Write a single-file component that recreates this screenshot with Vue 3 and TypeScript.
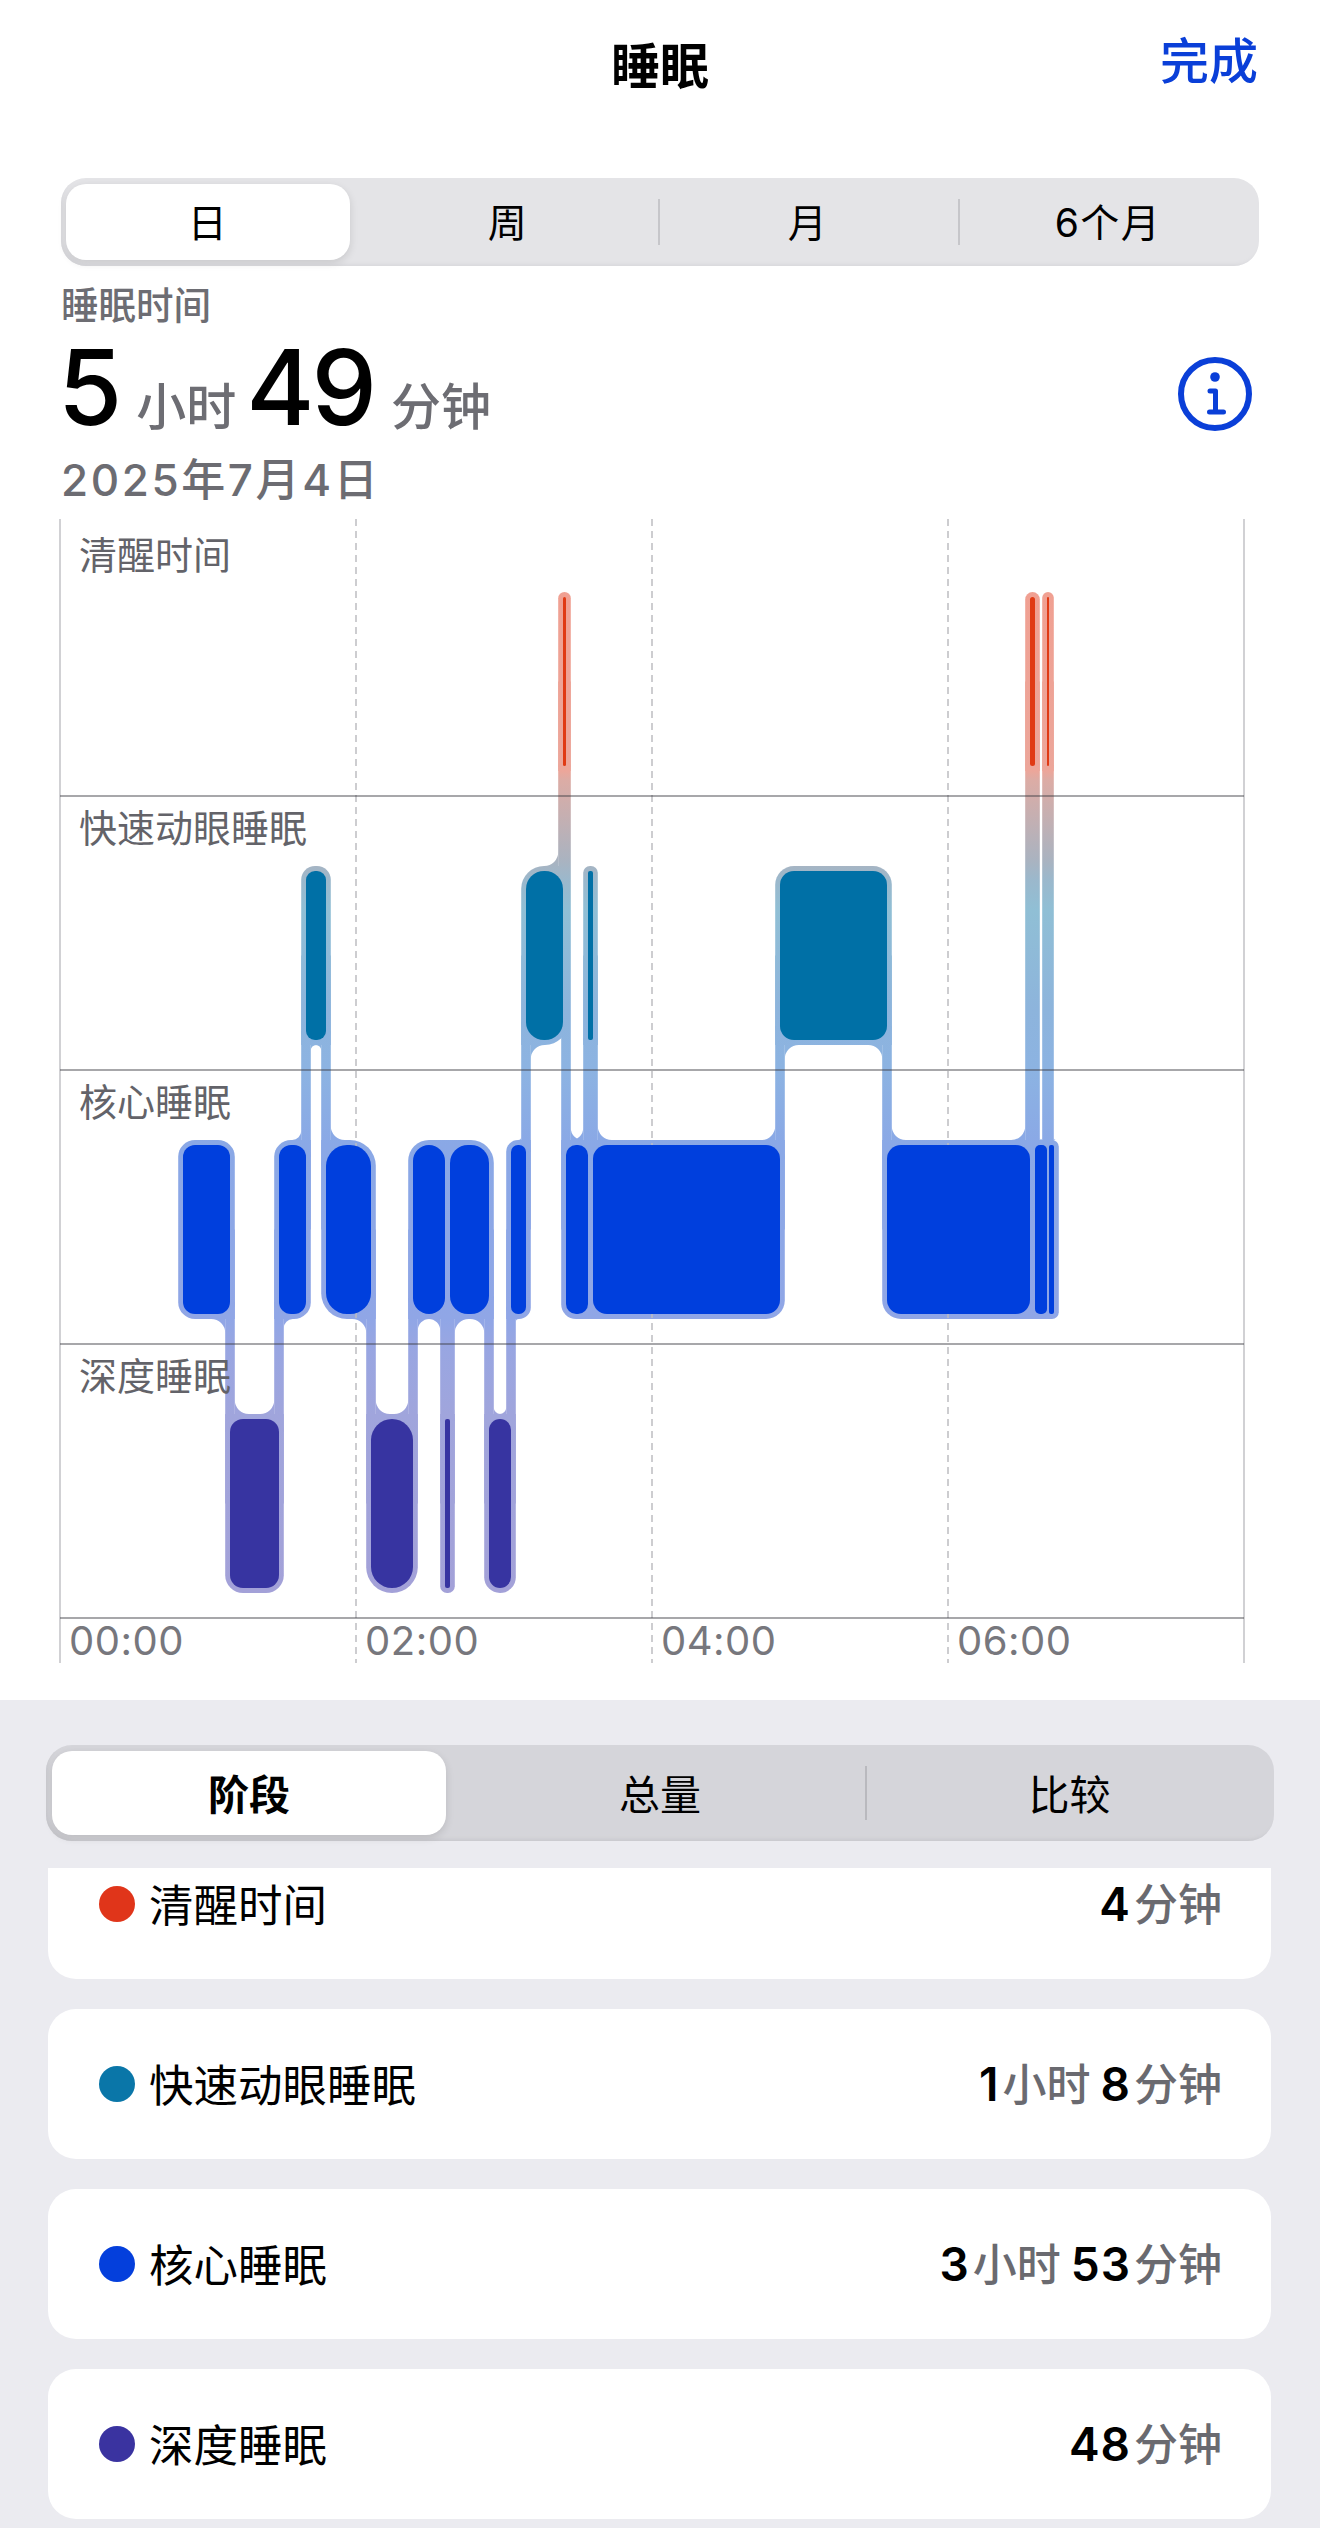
<script setup lang="ts">
type Stage = 'awake' | 'rem' | 'core' | 'deep';

interface Segment {
  stage: Stage;
  x0: number;
  x1: number;
  r: number;
  f?: number;
}

const BAR_H = 169;
const HALO_X = 4.8;
const HALO_Y = 5;

const rowTop: Record<Stage, number> = { awake: 597, rem: 871, core: 1145, deep: 1419 };
const stageColor: Record<Stage, string> = {
  awake: '#e03a14',
  rem: '#0070a6',
  core: '#003fdd',
  deep: '#3734a1',
};

const segments: Segment[] = [
  { stage: 'core', x0: 183, x1: 230, r: 12 },
  { stage: 'deep', x0: 230, x1: 279, r: 13 },
  { stage: 'core', x0: 279, x1: 306, r: 12 },
  { stage: 'rem', x0: 306, x1: 326, r: 9 },
  { stage: 'core', x0: 326, x1: 371, r: 21 },
  { stage: 'deep', x0: 371, x1: 413, r: 21 },
  { stage: 'core', x0: 413, x1: 445, r: 16 },
  { stage: 'deep', x0: 445, x1: 450, r: 2 },
  { stage: 'core', x0: 450, x1: 489, r: 18 },
  { stage: 'deep', x0: 489, x1: 511, r: 11 },
  { stage: 'core', x0: 511, x1: 526, r: 7 },
  { stage: 'rem', x0: 526, x1: 563, r: 18 },
  { stage: 'awake', x0: 563, x1: 566, r: 1.5 },
  { stage: 'core', x0: 566, x1: 588, r: 10, f: 12 },
  { stage: 'rem', x0: 588, x1: 593, r: 2 },
  { stage: 'core', x0: 593, x1: 780, r: 14 },
  { stage: 'rem', x0: 780, x1: 887, r: 14 },
  { stage: 'core', x0: 887, x1: 1030, r: 14 },
  { stage: 'awake', x0: 1030, x1: 1035, r: 2.5 },
  { stage: 'core', x0: 1035, x1: 1047, r: 5 },
  { stage: 'awake', x0: 1047, x1: 1049, r: 1 },
  { stage: 'core', x0: 1049, x1: 1054, r: 2 },
];

function haloRadius(s: Segment) {
  return Math.min(s.r + HALO_X, (s.x1 - s.x0) / 2 + HALO_X);
}

const cores = segments.map((s) => ({
  x: s.x0,
  y: rowTop[s.stage],
  w: s.x1 - s.x0,
  rx: Math.min(s.r, (s.x1 - s.x0) / 2),
  fill: stageColor[s.stage],
}));

const halos = segments.map((s) => ({
  x: s.x0 - HALO_X,
  y: rowTop[s.stage] - HALO_Y,
  w: s.x1 - s.x0 + HALO_X * 2,
  h: BAR_H + HALO_Y * 2,
  rx: haloRadius(s),
}));

function filletRadius(s: Segment) {
  if (s.f) return s.f;
  return Math.min(14, Math.max(2, (s.x1 - s.x0 - 9) / 2));
}

// concave corner between a link's side and the halo edge it runs into
function fillet(x: number, y: number, dx: number, dy: number, r: number) {
  const sweep = dx * dy > 0 ? 0 : 1;
  return `M${x} ${y}L${x + dx * r} ${y}A${r} ${r} 0 0 ${sweep} ${x} ${y + dy * r}Z`;
}

// vertical links and their curved shoulders between neighbouring stages
const links: { x: number; y: number; h: number }[] = [];
const shoulders: string[] = [];
// a halo keeps a square corner on the side where a link leaves it
const corners: { x: number; y: number; s: number }[] = [];
// same-stage neighbours share a flat top and bottom
const bridges: { x: number; y: number; w: number }[] = [];

segments.forEach((a, i) => {
  const b = segments[i + 1];
  if (!b) return;
  const x = a.x1;
  const aUp = rowTop[a.stage] < rowTop[b.stage];
  const up = aUp ? a : b;
  const low = aUp ? b : a;
  const yUp = rowTop[up.stage] + BAR_H / 2;
  const yLow = rowTop[low.stage] + BAR_H / 2;
  links.push({ x: x - HALO_X, y: yUp, h: yLow - yUp });
  const upEdge = rowTop[up.stage] + BAR_H + HALO_Y;
  const lowEdge = rowTop[low.stage] - HALO_Y;
  const ru = haloRadius(up);
  const rl = haloRadius(low);
  if (aUp) {
    corners.push({ x: x + HALO_X - ru, y: upEdge - ru, s: ru });
    corners.push({ x: x - HALO_X, y: lowEdge, s: rl });
    shoulders.push(fillet(x - HALO_X, upEdge, -1, 1, filletRadius(a)));
    shoulders.push(fillet(x + HALO_X, lowEdge, 1, -1, filletRadius(b)));
  } else {
    corners.push({ x: x - HALO_X, y: upEdge - ru, s: ru });
    corners.push({ x: x + HALO_X - rl, y: lowEdge, s: rl });
    shoulders.push(fillet(x + HALO_X, upEdge, 1, 1, filletRadius(b)));
    shoulders.push(fillet(x - HALO_X, lowEdge, -1, -1, filletRadius(a)));
  }
  const c = segments[i + 2];
  if (c && c.stage === a.stage && b.x1 - b.x0 < 10) {
    const from = (a.x0 + a.x1) / 2;
    bridges.push({ x: from, y: rowTop[a.stage] - HALO_Y, w: (c.x0 + c.x1) / 2 - from });
  }
});

const haloStops = [
  { at: 592, color: '#f0a092' },
  { at: 771, color: '#eca69a' },
  { at: 780, color: '#dcaca5' },
  { at: 860, color: '#aab3c0' },
  { at: 880, color: '#9bb8cc' },
  { at: 910, color: '#90bfd5' },
  { at: 1010, color: '#8db4dc' },
  { at: 1070, color: '#8cb3e2' },
  { at: 1145, color: '#8aa8e6' },
  { at: 1319, color: '#90a6e6' },
  { at: 1344, color: '#98a6e2' },
  { at: 1414, color: '#a0a5dc' },
  { at: 1592, color: '#a3a1d8' },
].map((s) => ({ offset: (s.at - 592) / 1000, color: s.color }));

const rowLines = [796, 1070, 1344, 1618];
const dashedLines = [356, 652, 948];
const solidLines = [60, 1244];
const rowLabels = [
  { y: 569, text: '清醒时间' },
  { y: 842, text: '快速动眼睡眠' },
  { y: 1116, text: '核心睡眠' },
  { y: 1390, text: '深度睡眠' },
];
const timeLabels = [
  { x: 69, text: '00:00' },
  { x: 365, text: '02:00' },
  { x: 661, text: '04:00' },
  { x: 957, text: '06:00' },
];

const ranges = ['日', '周', '月', '6个月'];
const views = ['阶段', '总量', '比较'];

const summary = [
  { name: '清醒时间', color: '#e0351a', value: [{ n: '4', u: '分钟' }] },
  { name: '快速动眼睡眠', color: '#0a76a8', value: [{ n: '1', u: '小时' }, { n: '8', u: '分钟' }] },
  { name: '核心睡眠', color: '#043fdc', value: [{ n: '3', u: '小时' }, { n: '53', u: '分钟' }] },
  { name: '深度睡眠', color: '#3a33a0', value: [{ n: '48', u: '分钟' }] },
];
</script>

<template>
  <div class="screen">
    <section class="sheet">
      <header class="nav">
        <h1 class="nav-title">睡眠</h1>
        <span class="nav-done">完成</span>
      </header>

      <div class="range-seg">
        <div v-for="(r, i) in ranges" :key="r" class="range-item" :class="{ active: i === 0, sep: i > 1 }">{{ r }}</div>
      </div>

      <div class="summary">
        <div class="summary-label">睡眠时间</div>
        <div class="summary-row">
          <div class="summary-time">
            <b>5</b><span>小时</span><b>49</b><span>分钟</span>
          </div>
          <svg class="info" width="76" height="76" viewBox="0 0 76 76" fill="none">
            <circle cx="38" cy="38" r="34" stroke="#0a3fd8" stroke-width="6" />
            <circle cx="38" cy="21" r="4.8" fill="#0a3fd8" />
            <path d="M33 35H38.5V56M32.5 56H46.5" stroke="#0a3fd8" stroke-width="5" stroke-linecap="round" stroke-linejoin="round" />
          </svg>
        </div>
        <div class="summary-date">2025年7月4日</div>
      </div>

      <svg class="chart" width="1320" height="1181" viewBox="0 519 1320 1181">
        <defs>
          <linearGradient id="halo" gradientUnits="userSpaceOnUse" x1="0" y1="592" x2="0" y2="1592">
            <stop v-for="s in haloStops" :key="s.offset" :offset="s.offset" :stop-color="s.color" />
          </linearGradient>
        </defs>

        <g fill="url(#halo)">
          <rect v-for="(h, i) in halos" :key="'h' + i" :x="h.x" :y="h.y" :width="h.w" :height="h.h" :rx="h.rx" />
          <rect v-for="(l, i) in links" :key="'l' + i" :x="l.x" :y="l.y" :width="HALO_X * 2" :height="l.h" />
          <rect v-for="(c, i) in corners" :key="'k' + i" :x="c.x" :y="c.y" :width="c.s" :height="c.s" />
          <rect v-for="(b, i) in bridges" :key="'b' + i" :x="b.x" :y="b.y" :width="b.w" :height="179" />
          <path v-for="(d, i) in shoulders" :key="'s' + i" :d="d" />
        </g>

        <line v-for="x in solidLines" :key="x" class="axis" :x1="x" :x2="x" y1="519" y2="1663" />
        <line v-for="x in dashedLines" :key="x" class="tick" :x1="x" :x2="x" y1="519" y2="1663" />
        <line v-for="y in rowLines" :key="y" class="row-line" x1="60" x2="1244" :y1="y" :y2="y" />

        <rect
          v-for="(c, i) in cores"
          :key="'c' + i"
          :x="c.x"
          :y="c.y"
          :width="c.w"
          :height="169"
          :rx="c.rx"
          :fill="c.fill"
        />

        <text v-for="l in rowLabels" :key="l.text" class="row-label" x="79" :y="l.y">{{ l.text }}</text>
        <text v-for="t in timeLabels" :key="t.text" class="time-label" :x="t.x" y="1655">{{ t.text }}</text>
      </svg>
    </section>

    <section class="lower">
      <div class="view-seg">
        <div v-for="(v, i) in views" :key="v" class="view-item" :class="{ active: i === 0, sep: i === 2 }">
          <span class="seg-text">{{ v }}</span>
        </div>
      </div>

      <div class="list">
        <div class="list-inner">
          <div v-for="item in summary" :key="item.name" class="card">
            <span class="dot" :style="{ background: item.color }"></span>
            <span class="card-name">{{ item.name }}</span>
            <span class="card-value">
              <template v-for="p in item.value" :key="p.u">
                <b>{{ p.n }}</b><span>{{ p.u }}</span>
              </template>
            </span>
          </div>
        </div>
      </div>
    </section>
  </div>
</template>

<style>
html,
body {
  margin: 0;
  background: #ebebf0;
}
</style>

<style scoped>
.screen {
  width: 1320px;
  height: 2528px;
  overflow: hidden;
  font-family: Inter, 'Noto Sans CJK SC', sans-serif;
  color: #000;
}

.sheet {
  background: #fff;
  height: 1700px;
}

.nav {
  position: relative;
  height: 124px;
  display: flex;
  align-items: center;
  justify-content: center;
}

.nav-title {
  margin: 0;
  font-size: 49px;
  font-weight: 700;
}

.nav-done {
  position: absolute;
  right: 62px;
  top: 36px;
  font-size: 49px;
  line-height: 52px;
  font-weight: 500;
  color: #0a3fd8;
}

.range-seg {
  margin: 54px 61px 0;
  height: 88px;
  box-sizing: border-box;
  padding: 6px 1px 6px 5px;
  display: grid;
  grid-template-columns: 292px 300px 300px 300px;
  background: #e4e4e7;
  border-radius: 25px;
  box-shadow: inset 3px -3px 4px -2px #d4d4d8;
}

.range-item {
  position: relative;
  display: flex;
  align-items: center;
  justify-content: center;
  padding-bottom: 5px;
  font-size: 39px;
  letter-spacing: 1.5px;
}

.range-item.active {
  margin-right: 8px;
  background: #fff;
  border-radius: 20px;
  box-shadow: 0 3px 8px rgba(0, 0, 0, 0.12);
}

.range-item.sep::before {
  content: '';
  position: absolute;
  left: 0;
  top: 15px;
  bottom: 15px;
  width: 2px;
  background: #c6c6ca;
}

.summary {
  padding: 20px 67px 0 61px;
}

.summary-label {
  font-size: 37.5px;
  line-height: 40px;
  color: #6d6d73;
  font-weight: 500;
}

.summary-row {
  display: flex;
  align-items: center;
  justify-content: space-between;
  height: 136px;
}

.summary-time {
  display: flex;
  align-items: baseline;
  margin-left: -3px;
  padding-top: 6px;
  color: #6d6d73;
  font-size: 50px;
  font-weight: 500;
  line-height: 130px;
}

.summary-time b {
  color: #000;
  font-size: 104px;
  font-weight: 500;
  letter-spacing: -3px;
}

.summary-time span {
  margin: 0 10px 0 17px;
}

.info {
  flex: none;
}

.summary-date {
  margin-top: -7px;
  font-size: 44px;
  line-height: 50px;
  font-weight: 500;
  letter-spacing: 2.6px;
  color: #6c6c72;
}

.chart {
  display: block;
  margin-top: 14px;
}

.axis {
  stroke: #c2c2c6;
  stroke-width: 1.5;
}

.tick {
  stroke: #bdbdc1;
  stroke-width: 1.5;
  stroke-dasharray: 7 5;
}

.row-line {
  stroke: rgba(60, 60, 67, 0.45);
  stroke-width: 2;
}

.row-label {
  font-size: 38px;
  fill: #636369;
}

.time-label {
  font-size: 40px;
  letter-spacing: 0.5px;
  fill: #77777d;
}

.lower {
  padding-top: 45px;
}

.view-seg {
  margin: 0 46px;
  height: 96px;
  box-sizing: border-box;
  padding: 6px 0 6px 6px;
  display: grid;
  grid-template-columns: 403px 410px 409px;
  background: #d5d5da;
  border-radius: 26px;
  box-shadow: inset 3px -3px 4px -2px #c4c4c9;
}

.view-item {
  position: relative;
  display: flex;
  align-items: center;
  justify-content: center;
  padding-bottom: 3px;
  font-size: 41px;
}

.view-item.active {
  margin-right: 9px;
  background: #fff;
  border-radius: 20px;
  font-weight: 700;
  box-shadow: 0 3px 8px rgba(0, 0, 0, 0.12);
}

.view-item.sep::before {
  content: '';
  position: absolute;
  left: 0;
  top: 15px;
  bottom: 15px;
  width: 2px;
  background: #b9b9be;
}

.list {
  margin-top: 27px;
  height: 660px;
  overflow: hidden;
}

.list-inner {
  margin-top: -39px;
  display: flex;
  flex-direction: column;
  gap: 30px;
  padding: 0 49px 0 48px;
}

.card {
  height: 150px;
  box-sizing: border-box;
  padding: 0 49px 0 51px;
  display: flex;
  align-items: center;
  background: #fff;
  border-radius: 28px;
}

.dot {
  flex: none;
  width: 36px;
  height: 36px;
  border-radius: 50%;
}

.card-name {
  margin-left: 14px;
  padding-bottom: 4px;
  font-size: 44.5px;
}

.card-value {
  margin-left: auto;
  padding-bottom: 4px;
  display: flex;
  align-items: baseline;
  font-size: 44px;
  font-weight: 500;
  color: #6a6a70;
}

.card-value b {
  color: #000;
  font-size: 46px;
  font-weight: 600;
  letter-spacing: 1px;
  margin-left: 10px;
}

.card-value span {
  margin-left: 3px;
}
</style>
